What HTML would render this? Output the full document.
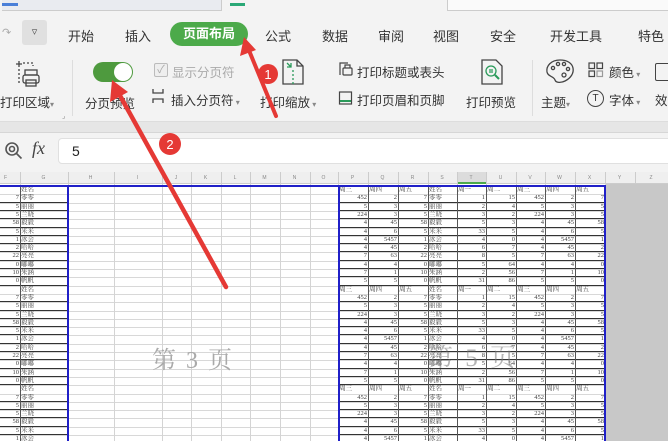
<!DOCTYPE html>
<html><head><meta charset="utf-8">
<style>
*{margin:0;padding:0;box-sizing:border-box}
body{width:668px;height:441px;overflow:hidden;position:relative;background:#f3f3f3;font-family:"Liberation Sans","Noto Sans CJK SC",sans-serif;color:#333}
.a{position:absolute;white-space:nowrap}
.m{font-size:13px;top:26px}
.r{font-size:12.5px;color:#333}
#grid{position:absolute;left:0;top:172px;width:668px;height:269px;background:#fff;overflow:hidden}
.c{position:absolute;font-size:6.5px;color:#444;overflow:hidden;white-space:nowrap;text-align:right;padding-right:1px;line-height:8px;font-family:"Liberation Serif","Noto Serif CJK SC",serif}
.c.l{text-align:left;padding-left:1px}
</style></head><body>
<div class="a" style="left:0;top:0;width:668px;height:13px;background:#f3f3f3"></div>
<div class="a" style="left:2px;top:0;width:220px;height:11px;background:#e9ebf0;border-bottom:1px solid #ccc;border-right:1px solid #ccc"></div>
<div class="a" style="left:2px;top:3px;width:16px;height:3px;background:#4a7fd8"></div>
<div class="a" style="left:230px;top:3px;width:15px;height:3px;background:#2aa876"></div>
<div class="a" style="left:447px;top:0;width:221px;height:11px;background:#fafafa;border-bottom:1px solid #ccc;border-left:1px solid #ccc"></div>
<div class="a" style="left:22px;top:20px;width:25px;height:25px;background:#e0e0e0;border-radius:3px;font-size:11px;text-align:center;line-height:25px;color:#555">▿</div>
<div class="a" style="left:2px;top:26px;font-size:11px;color:#aaa">↷</div>
<div class="a m" style="left:68px">开始</div>
<div class="a m" style="left:125px">插入</div>
<div class="a" style="left:170px;top:22px;width:78px;height:24px;background:#4caa4a;border-radius:12px;color:#fff;font-size:13px;font-weight:bold;text-align:center;line-height:24px">页面布局</div>
<div class="a m" style="left:265px">公式</div>
<div class="a m" style="left:322px">数据</div>
<div class="a m" style="left:378px">审阅</div>
<div class="a m" style="left:433px">视图</div>
<div class="a m" style="left:490px">安全</div>
<div class="a m" style="left:550px">开发工具</div>
<div class="a m" style="left:638px">特色</div>
<svg class="a" style="left:14px;top:58px" width="34" height="32" viewBox="0 0 34 32" fill="none" stroke="#444" stroke-width="1.3">
<path d="M2 6h6M5 3v6" /><path d="M9 5h10v3" stroke-dasharray="2 2"/><path d="M5 11v14" stroke-dasharray="2 2"/>
<rect x="11" y="12" width="12" height="5"/><rect x="9" y="17" width="16" height="8" rx="2"/><rect x="12" y="22" width="10" height="6"/></svg>
<div class="a r" style="left:0;top:92px">打印区域<span style="font-size:8px;color:#888">▾</span></div>
<div class="a" style="left:62px;top:112px;font-size:7px;color:#888">⌟</div>
<div class="a" style="left:72px;top:60px;width:1px;height:56px;background:#ddd"></div>
<div class="a" style="left:93px;top:62px;width:40px;height:20px;background:#4e9a3e;border-radius:10px"></div>
<div class="a" style="left:114px;top:63px;width:18px;height:18px;background:#fff;border-radius:50%"></div>
<div class="a r" style="left:85px;top:93px">分页预览</div>
<div class="a" style="left:154px;top:63px;width:14px;height:14px;border:1px solid #bbb;background:#eee;border-radius:2px;color:#aaa;font-size:11px;line-height:12px;text-align:center">✓</div>
<div class="a r" style="left:172px;top:62px;color:#aaa">显示分页符</div>
<svg class="a" style="left:151px;top:88px" width="14" height="16" viewBox="0 0 14 16" fill="none" stroke="#444" stroke-width="1.3"><path d="M2 1v4h10V1M2 15v-4h10v4"/></svg>
<div class="a r" style="left:171px;top:90px">插入分页符<span style="font-size:8px;color:#888"> ▾</span></div>
<svg class="a" style="left:281px;top:58px" width="24" height="28" viewBox="0 0 24 28" fill="none" stroke="#444" stroke-width="1.3"><path d="M2 2h14l6 6v18H2z"/><path d="M16 2v6h6"/><path d="M6 5l4 4M6 9h4V5" stroke="#2a9a5a"/><path d="M12 12v14" stroke-dasharray="2 2" stroke="#2a9a5a"/></svg>
<div class="a r" style="left:260px;top:92px">打印缩放<span style="font-size:8px;color:#888"> ▾</span></div>
<svg class="a" style="left:338px;top:61px" width="15" height="16" viewBox="0 0 15 16" fill="none" stroke="#444" stroke-width="1.2"><path d="M2 14V2h8"/><rect x="5" y="7" width="9" height="7" rx="1"/><path d="M7 7V4h5v3"/></svg>
<div class="a r" style="left:357px;top:62px">打印标题或表头</div>
<svg class="a" style="left:338px;top:90px" width="15" height="16" viewBox="0 0 15 16" fill="none" stroke="#444" stroke-width="1.2"><rect x="1.5" y="2" width="12" height="12"/><path d="M2 11h11" stroke="#2a9a5a" stroke-width="2"/></svg>
<div class="a r" style="left:357px;top:90px">打印页眉和页脚</div>
<svg class="a" style="left:480px;top:58px" width="24" height="28" viewBox="0 0 24 28" fill="none" stroke="#444" stroke-width="1.3"><path d="M2 2h14l6 6v18H2z"/><circle cx="11" cy="13" r="5" stroke="#2a9a5a"/><path d="M9 12h4M9 14h4" stroke="#2a9a5a"/><path d="M15 17l4 4" stroke="#2a9a5a" stroke-width="2"/></svg>
<div class="a r" style="left:466px;top:92px">打印预览</div>
<div class="a" style="left:532px;top:60px;width:1px;height:56px;background:#ddd"></div>
<svg class="a" style="left:545px;top:58px" width="30" height="26" viewBox="0 0 30 26" fill="none" stroke="#444" stroke-width="1.3"><path d="M15 2C6 2 1 8 2 14c1 5 7 4 8 8 1 3 6 3 10 1 6-3 9-8 8-13C27 5 22 2 15 2z"/><circle cx="8" cy="10" r="1.6"/><circle cx="13" cy="6" r="1.6"/><circle cx="19" cy="6" r="1.6"/><circle cx="23" cy="11" r="1.6"/><circle cx="19" cy="17" r="2"/></svg>
<div class="a r" style="left:541px;top:92px">主题<span style="font-size:8px;color:#888">▾</span></div>
<svg class="a" style="left:588px;top:62px" width="16" height="16" viewBox="0 0 16 16" fill="none" stroke="#444" stroke-width="1.2"><rect x="1" y="1" width="5.5" height="5.5"/><rect x="9" y="1" width="5.5" height="5.5"/><rect x="1" y="9" width="5.5" height="5.5"/><rect x="9" y="9" width="5.5" height="5.5" stroke="#999"/></svg>
<div class="a r" style="left:609px;top:62px">颜色<span style="font-size:8px;color:#888"> ▾</span></div>
<div class="a" style="left:655px;top:63px;width:16px;height:18px;border:1.3px solid #444;border-radius:2px"></div>
<div class="a" style="left:587px;top:90px;width:17px;height:17px;border:1.2px solid #444;border-radius:50%;font-size:10px;text-align:center;line-height:15px">T</div>
<div class="a r" style="left:609px;top:90px">字体<span style="font-size:8px;color:#888"> ▾</span></div>
<div class="a r" style="left:655px;top:90px">效</div>
<div class="a" style="left:0;top:121px;width:668px;height:12px;background:#e6e6e6;border-top:1px solid #ddd;border-bottom:1px solid #d6d6d6"></div>
<div class="a" style="left:0;top:134px;width:668px;height:38px;background:#f3f3f3"></div>
<svg class="a" style="left:4px;top:141px" width="20" height="20" viewBox="0 0 20 20" fill="none" stroke="#555" stroke-width="1.6"><circle cx="8" cy="8" r="6"/><circle cx="8" cy="8" r="2.5"/><path d="M12.5 12.5l5 5"/></svg>
<div class="a" style="left:32px;top:138px;font-size:18px;font-style:italic;font-family:'Liberation Serif',serif;color:#444">fx</div>
<div class="a" style="left:58px;top:138px;width:620px;height:26px;background:#fff;border:1px solid #e0e0e0;border-radius:4px;font-size:14px;line-height:24px;padding-left:13px;color:#222">5</div>
<div id="grid"></div>
<div class="a" style="left:152px;top:340px;font-size:24px;color:#aaa;font-family:'Liberation Serif','Noto Serif CJK SC',serif;letter-spacing:2px">第 3 页</div>
<div class="a" style="left:428px;top:338px;font-size:25px;color:rgba(120,120,120,.55);font-family:'Liberation Serif','Noto Serif CJK SC',serif;letter-spacing:3px">第 5 页</div>
<svg class="a" style="left:0;top:0" width="668" height="441">
<path d="M276 116L248 48" stroke="#e53935" stroke-width="4" stroke-linecap="round"/>
<path d="M244 37L240 56L256 50Z" fill="#e53935"/>
<path d="M226 287L118 92" stroke="#e53935" stroke-width="4.5" stroke-linecap="round"/>
<path d="M112 80L110 102L128 92Z" fill="#e53935"/>
<circle cx="268" cy="74" r="10" fill="#e53935"/>
<circle cx="170" cy="144" r="11" fill="#e53935"/>
<text x="268" y="79" font-size="13" fill="#fff" text-anchor="middle" font-family="Liberation Sans">1</text>
<text x="170" y="149" font-size="13" fill="#fff" text-anchor="middle" font-family="Liberation Sans">2</text>
</svg>
<script>
(function(){
var g=document.getElementById('grid'),h='';
var cols=[['F',-8,20],['G',20,68],['H',68,114],['I',114,162],['J',162,191],['K',191,221],['L',221,250],['M',250,280],['N',280,310],['O',310,338],['P',338,368],['Q',368,398],['R',398,428],['S',428,457],['T',457,486],['U',486,516],['V',516,545],['W',545,575],['X',575,605],['Y',605,635],['Z',635,668]];
h+='<div style="position:absolute;left:0;top:0;width:668px;height:12px;background:#efefef;border-bottom:1px solid #ccc"></div>';
h+='<div style="position:absolute;left:457px;top:0;width:29px;height:12px;background:#dcdcdc;border-bottom:2px solid #4caa4a"></div>';
cols.forEach(function(c){h+='<div class="c" style="left:'+c[1]+'px;top:2px;width:'+(c[2]-c[1])+'px;text-align:center;color:#888;font-size:5px;font-family:Liberation Sans">'+c[0]+'</div><div style="position:absolute;left:'+c[2]+'px;top:0;width:1px;height:12px;background:#ccc"></div>';});
var top0=14,rh=8.3,n=32;
h+='<div style="position:absolute;left:606px;top:12px;width:62px;height:260px;background:#c8c8c8"></div>';
for(var i=0;i<=n;i++){var y=top0+i*rh;h+='<div style="position:absolute;left:0;top:'+y.toFixed(1)+'px;width:606px;height:1px;background:#d8d8d8"></div>';}
cols.forEach(function(c){if(c[2]<606)h+='<div style="position:absolute;left:'+c[2]+'px;top:12px;width:1px;height:260px;background:#d4d4d4"></div>';});
var names=['零零','丽丽','兰晓','毅毅','米米','冰会','哈哈','亮亮','嘟嘟','朱涵','帆帆'];
var d=[[452,2,7,1,15],[5,3,5,2,4],[224,3,5,3,2],[4,45,58,5,3],[4,6,5,33,5],[4,5457,1,4,0],[4,45,2,6,7],[7,63,22,8,5],[4,4,0,5,64],[7,1,10,2,56],[5,5,0,31,86]];
var hd=['周三','周四','周五','姓名','周一','周二','周三','周四','周五'];
for(var i=0;i<n;i++){
 var y=(top0+i*rh).toFixed(1),k=i%12;
 var cells;
 if(k==0){cells=hd.map(function(t){return [t,1]});h+='<div class="c l" style="left:20px;top:'+y+'px;width:48px">姓名</div>';}
 else{var r=d[k-1];cells=[[r[0]],[r[1]],[r[2]],[names[k-1],1],[r[3]],[r[4]],[r[0]],[r[1]],[r[2]]];
  h+='<div class="c" style="left:0;top:'+y+'px;width:20px">'+r[2]+'</div><div class="c l" style="left:20px;top:'+y+'px;width:48px">'+names[k-1]+'</div>';
  h+='<div style="position:absolute;left:0;top:'+(+y+7.3)+'px;width:68px;height:1px;background:#333"></div>';
  h+='<div style="position:absolute;left:340px;top:'+(+y+7.3)+'px;width:265px;height:1px;background:#333"></div>';}
 for(var j=0;j<9;j++){var c=cols[10+j];h+='<div class="c'+(cells[j][1]?' l':'')+'" style="left:'+c[1]+'px;top:'+y+'px;width:'+(c[2]-c[1])+'px">'+cells[j][0]+'</div>';}
}
[20,368,398,428,457,486,516,545,575].forEach(function(x){h+='<div style="position:absolute;left:'+x+'px;top:14px;width:1px;height:260px;background:#555"></div>';});
h+='<div style="position:absolute;left:0;top:13px;width:606px;height:2px;background:#2020c8"></div>';
[67,338,604].forEach(function(x){h+='<div style="position:absolute;left:'+x+'px;top:13px;width:2px;height:260px;background:#2020c8"></div>';});
g.innerHTML=h;
})();
</script>
</body></html>
